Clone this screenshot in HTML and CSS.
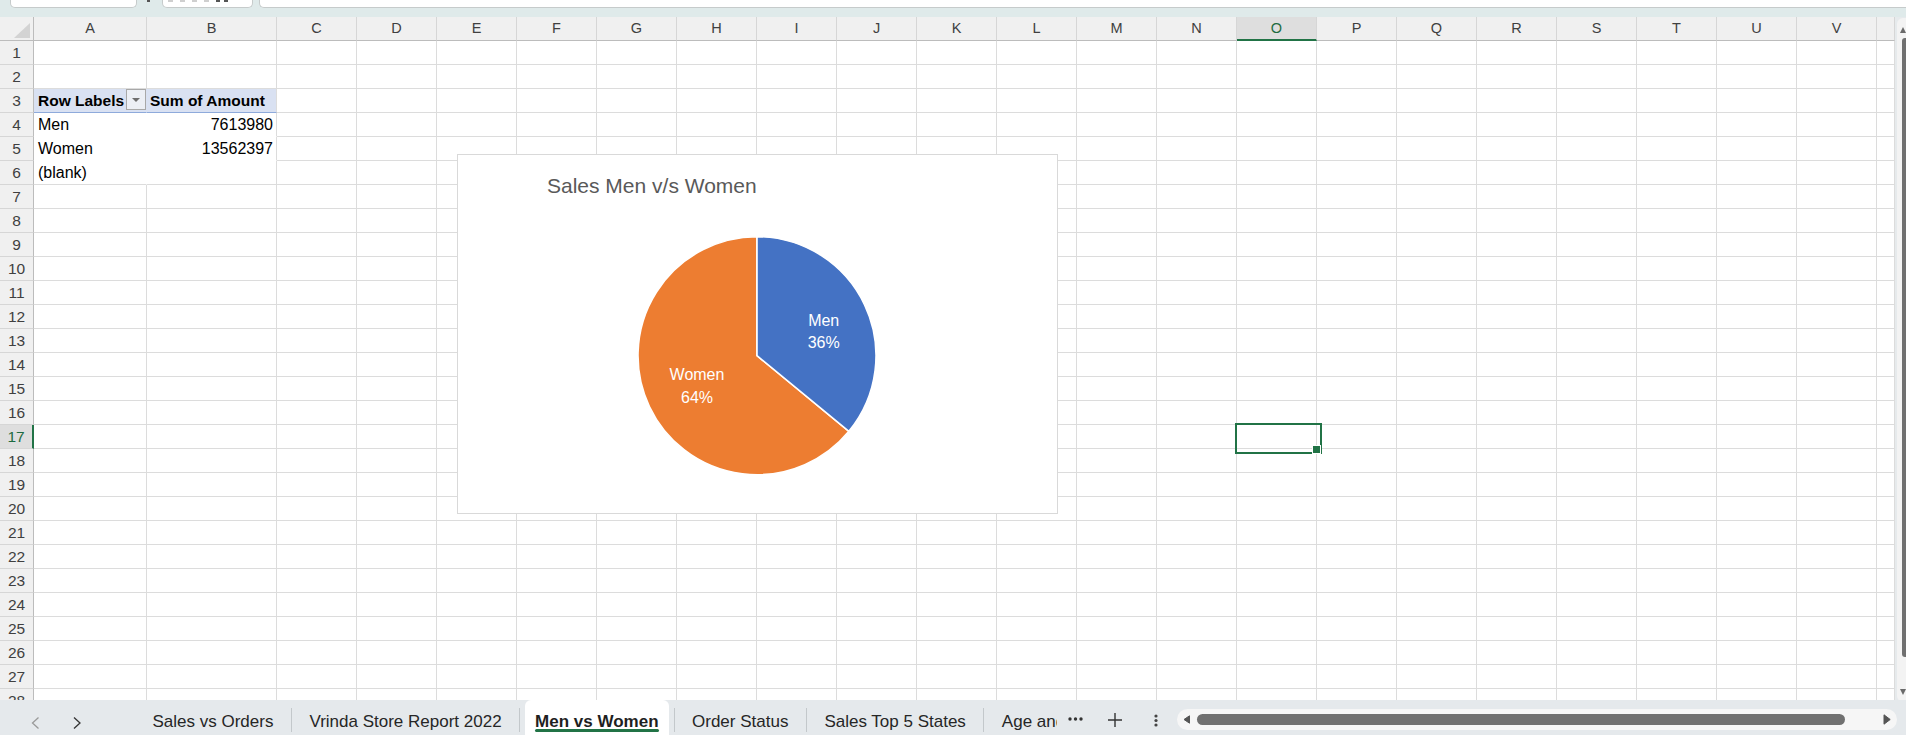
FILE: index.html
```html
<!DOCTYPE html>
<html lang="en">
<head>
<meta charset="utf-8">
<title>Men vs Women</title>
<link rel="stylesheet" href="styles.css">
</head>
<body>
<div class="app">
  <div class="topbar">
    <div class="namebox"></div>
    <div class="nbarrow"></div>
    <div class="fxbox"><span class="ic"></span><span class="ic"></span><span class="ic"></span><span class="ic"></span><span class="ic dk"></span><span class="ic dk"></span></div>
    <div class="formula"></div>
  </div>
  <div class="main">
    <div class="sheet">
      <span class="corner"><em></em></span><span class="ch">A</span><span class="ch">B</span><span class="ch">C</span><span class="ch">D</span><span class="ch">E</span><span class="ch">F</span><span class="ch">G</span><span class="ch">H</span><span class="ch">I</span><span class="ch">J</span><span class="ch">K</span><span class="ch">L</span><span class="ch">M</span><span class="ch">N</span><span class="ch on">O</span><span class="ch">P</span><span class="ch">Q</span><span class="ch">R</span><span class="ch">S</span><span class="ch">T</span><span class="ch">U</span><span class="ch">V</span><span class="ch"></span>
      <span class="rh">1</span><i></i><i></i><i></i><i></i><i></i><i></i><i></i><i></i><i></i><i></i><i></i><i></i><i></i><i></i><i></i><i></i><i></i><i></i><i></i><i></i><i></i><i></i><i></i>
      <span class="rh">2</span><i></i><i></i><i></i><i></i><i></i><i></i><i></i><i></i><i></i><i></i><i></i><i></i><i></i><i></i><i></i><i></i><i></i><i></i><i></i><i></i><i></i><i></i><i></i>
      <span class="rh">3</span><i class="pvh pa">Row Labels<span class="flt"><span class="tri"></span></span></i><i class="pvh">Sum of Amount</i><i></i><i></i><i></i><i></i><i></i><i></i><i></i><i></i><i></i><i></i><i></i><i></i><i></i><i></i><i></i><i></i><i></i><i></i><i></i><i></i><i></i>
      <span class="rh">4</span><i class="t pa nb">Men</i><i class="t r nb">7613980</i><i></i><i></i><i></i><i></i><i></i><i></i><i></i><i></i><i></i><i></i><i></i><i></i><i></i><i></i><i></i><i></i><i></i><i></i><i></i><i></i><i></i>
      <span class="rh">5</span><i class="t pa nb">Women</i><i class="t r nb">13562397</i><i></i><i></i><i></i><i></i><i></i><i></i><i></i><i></i><i></i><i></i><i></i><i></i><i></i><i></i><i></i><i></i><i></i><i></i><i></i><i></i><i></i>
      <span class="rh">6</span><i class="t pa">(blank)</i><i></i><i></i><i></i><i></i><i></i><i></i><i></i><i></i><i></i><i></i><i></i><i></i><i></i><i></i><i></i><i></i><i></i><i></i><i></i><i></i><i></i><i></i>
      <span class="rh">7</span><i></i><i></i><i></i><i></i><i></i><i></i><i></i><i></i><i></i><i></i><i></i><i></i><i></i><i></i><i></i><i></i><i></i><i></i><i></i><i></i><i></i><i></i><i></i>
      <span class="rh">8</span><i></i><i></i><i></i><i></i><i></i><i></i><i></i><i></i><i></i><i></i><i></i><i></i><i></i><i></i><i></i><i></i><i></i><i></i><i></i><i></i><i></i><i></i><i></i>
      <span class="rh">9</span><i></i><i></i><i></i><i></i><i></i><i></i><i></i><i></i><i></i><i></i><i></i><i></i><i></i><i></i><i></i><i></i><i></i><i></i><i></i><i></i><i></i><i></i><i></i>
      <span class="rh">10</span><i></i><i></i><i></i><i></i><i></i><i></i><i></i><i></i><i></i><i></i><i></i><i></i><i></i><i></i><i></i><i></i><i></i><i></i><i></i><i></i><i></i><i></i><i></i>
      <span class="rh">11</span><i></i><i></i><i></i><i></i><i></i><i></i><i></i><i></i><i></i><i></i><i></i><i></i><i></i><i></i><i></i><i></i><i></i><i></i><i></i><i></i><i></i><i></i><i></i>
      <span class="rh">12</span><i></i><i></i><i></i><i></i><i></i><i></i><i></i><i></i><i></i><i></i><i></i><i></i><i></i><i></i><i></i><i></i><i></i><i></i><i></i><i></i><i></i><i></i><i></i>
      <span class="rh">13</span><i></i><i></i><i></i><i></i><i></i><i></i><i></i><i></i><i></i><i></i><i></i><i></i><i></i><i></i><i></i><i></i><i></i><i></i><i></i><i></i><i></i><i></i><i></i>
      <span class="rh">14</span><i></i><i></i><i></i><i></i><i></i><i></i><i></i><i></i><i></i><i></i><i></i><i></i><i></i><i></i><i></i><i></i><i></i><i></i><i></i><i></i><i></i><i></i><i></i>
      <span class="rh">15</span><i></i><i></i><i></i><i></i><i></i><i></i><i></i><i></i><i></i><i></i><i></i><i></i><i></i><i></i><i></i><i></i><i></i><i></i><i></i><i></i><i></i><i></i><i></i>
      <span class="rh">16</span><i></i><i></i><i></i><i></i><i></i><i></i><i></i><i></i><i></i><i></i><i></i><i></i><i></i><i></i><i></i><i></i><i></i><i></i><i></i><i></i><i></i><i></i><i></i>
      <span class="rh on">17</span><i></i><i></i><i></i><i></i><i></i><i></i><i></i><i></i><i></i><i></i><i></i><i></i><i></i><i></i><i class="sel"></i><i></i><i></i><i></i><i></i><i></i><i></i><i></i><i></i>
      <span class="rh">18</span><i></i><i></i><i></i><i></i><i></i><i></i><i></i><i></i><i></i><i></i><i></i><i></i><i></i><i></i><i></i><i></i><i></i><i></i><i></i><i></i><i></i><i></i><i></i>
      <span class="rh">19</span><i></i><i></i><i></i><i></i><i></i><i></i><i></i><i></i><i></i><i></i><i></i><i></i><i></i><i></i><i></i><i></i><i></i><i></i><i></i><i></i><i></i><i></i><i></i>
      <span class="rh">20</span><i></i><i></i><i></i><i></i><i></i><i></i><i></i><i></i><i></i><i></i><i></i><i></i><i></i><i></i><i></i><i></i><i></i><i></i><i></i><i></i><i></i><i></i><i></i>
      <span class="rh">21</span><i></i><i></i><i></i><i></i><i></i><i></i><i></i><i></i><i></i><i></i><i></i><i></i><i></i><i></i><i></i><i></i><i></i><i></i><i></i><i></i><i></i><i></i><i></i>
      <span class="rh">22</span><i></i><i></i><i></i><i></i><i></i><i></i><i></i><i></i><i></i><i></i><i></i><i></i><i></i><i></i><i></i><i></i><i></i><i></i><i></i><i></i><i></i><i></i><i></i>
      <span class="rh">23</span><i></i><i></i><i></i><i></i><i></i><i></i><i></i><i></i><i></i><i></i><i></i><i></i><i></i><i></i><i></i><i></i><i></i><i></i><i></i><i></i><i></i><i></i><i></i>
      <span class="rh">24</span><i></i><i></i><i></i><i></i><i></i><i></i><i></i><i></i><i></i><i></i><i></i><i></i><i></i><i></i><i></i><i></i><i></i><i></i><i></i><i></i><i></i><i></i><i></i>
      <span class="rh">25</span><i></i><i></i><i></i><i></i><i></i><i></i><i></i><i></i><i></i><i></i><i></i><i></i><i></i><i></i><i></i><i></i><i></i><i></i><i></i><i></i><i></i><i></i><i></i>
      <span class="rh">26</span><i></i><i></i><i></i><i></i><i></i><i></i><i></i><i></i><i></i><i></i><i></i><i></i><i></i><i></i><i></i><i></i><i></i><i></i><i></i><i></i><i></i><i></i><i></i>
      <span class="rh">27</span><i></i><i></i><i></i><i></i><i></i><i></i><i></i><i></i><i></i><i></i><i></i><i></i><i></i><i></i><i></i><i></i><i></i><i></i><i></i><i></i><i></i><i></i><i></i>
      <span class="rh">28</span><i></i><i></i><i></i><i></i><i></i><i></i><i></i><i></i><i></i><i></i><i></i><i></i><i></i><i></i><i></i><i></i><i></i><i></i><i></i><i></i><i></i><i></i><i></i>

      <div class="chart">
        <div class="ctitle">Sales Men v/s Women</div>
        <svg class="pie" width="599" height="300" viewBox="0 0 599 300">
          <path d="M299 157.7 L390.9 233.3 A119 119 0 1 1 299 38.7 Z" fill="#ed7d31" stroke="#fff" stroke-width="1.6" stroke-linejoin="round"/>
          <path d="M299 157.7 L299 38.7 A119 119 0 0 1 390.9 233.3 Z" fill="#4472c4" stroke="#fff" stroke-width="1.6" stroke-linejoin="round"/>
          <text class="lbl" x="365.7" y="127.7">Men</text>
          <text class="lbl" x="365.7" y="150">36%</text>
          <text class="lbl" x="239" y="182">Women</text>
          <text class="lbl" x="239" y="204.7">64%</text>
        </svg>
      </div>
    </div>
    <svg class="vscroll" width="9" height="684" viewBox="0 0 9 684">
      <rect x="0" y="0" width="16" height="684" rx="6" fill="#f3f3f3"/>
      <path d="M3 15 L6 9 L9 15 Z" fill="#6a6a6a"/>
      <rect x="5" y="20" width="8" height="619" rx="3" fill="#707070"/>
      <path d="M3 671 L9 671 L6 677 Z" fill="#6a6a6a"/>
    </svg>
  </div>
  <div class="tabbar">
    <svg class="nav" width="135" height="35" viewBox="0 0 135 35">
      <polyline points="38.5,17.5 32.5,23 38.5,28.5" fill="none" stroke="#9a9a9a" stroke-width="1.3"/>
      <polyline points="74,17.5 80,23 74,28.5" fill="none" stroke="#333" stroke-width="1.3"/>
    </svg>
    <div class="tabs">
      <div class="tab">Sales vs Orders</div>
      <div class="sep"></div>
      <div class="tab">Vrinda Store Report 2022</div>
      <div class="sep"></div>
      <div class="tab act">Men vs Women</div>
      <div class="sep"></div>
      <div class="tab">Order Status</div>
      <div class="sep"></div>
      <div class="tab">Sales Top 5 States</div>
      <div class="sep"></div>
      <div class="tab">Age and Gender</div>
    </div>
    <svg class="more" width="15" height="4" viewBox="0 0 15 4"><circle cx="2" cy="2" r="1.7" fill="#333"/><circle cx="7.5" cy="2" r="1.7" fill="#333"/><circle cx="13" cy="2" r="1.7" fill="#333"/></svg>
    <svg class="plus" width="16" height="16" viewBox="0 0 16 16"><path d="M8 1 V15 M1 8 H15" stroke="#333" stroke-width="1.4" fill="none"/></svg>
    <svg class="kebab" width="4" height="13" viewBox="0 0 4 13"><circle cx="2" cy="2" r="1.6" fill="#444"/><circle cx="2" cy="6.5" r="1.6" fill="#444"/><circle cx="2" cy="11" r="1.6" fill="#444"/></svg>
    <div class="hscroll">
      <svg class="harr l" width="7" height="9" viewBox="0 0 7 9"><path d="M6.5 0.8 L1 4.5 L6.5 8.2 Z" fill="#555" stroke="#555" stroke-width="1" stroke-linejoin="round"/></svg>
      <div class="thumb"></div>
      <svg class="harr r" width="8" height="11" viewBox="0 0 8 11"><path d="M1 0.8 L7.2 5.5 L1 10.2 Z" fill="#555" stroke="#555" stroke-width="1" stroke-linejoin="round"/></svg>
    </div>
  </div>
</div>
</body>
</html>
```
FILE: styles.css
```css
* { box-sizing: border-box; margin: 0; padding: 0; }
html, body { width: 1906px; height: 735px; overflow: hidden; }
body { background: #e6eaec; font-family: "Liberation Sans", Arial, sans-serif; color: #000; }

.app { display: flex; flex-direction: column; width: 1906px; height: 735px; }

/* top formula strip (cut off) */
.topbar { flex: none; height: 17px; display: flex; align-items: flex-start; background: #dfeaea; }
.namebox { margin-left: 10px; width: 127px; height: 8px; background: #fff; border: 1px solid #c6cbcb; border-top: 0; border-radius: 0 0 5px 5px; }
.nbarrow { margin-left: 10px; width: 3px; height: 2px; background: #555; }
.fxbox { margin-left: 12px; width: 91px; height: 8px; background: #fff; border: 1px solid #c6cbcb; border-top: 0; border-radius: 0 0 5px 5px; display: flex; align-items: flex-start; padding-left: 5px; }
.ic { width: 5px; height: 2px; background: #cfcfcf; margin-right: 7px; }
.ic.dk { width: 4px; background: #555; margin-right: 4px; }
.ic.dk:first-of-type { margin-left: 14px; }
.formula { margin-left: 6px; flex: 1; height: 8px; background: #fff; border: 1px solid #c6cbcb; border-top: 0; border-right: 0; border-radius: 0 0 0 5px; }

/* sheet */
.main { flex: none; height: 683px; display: flex; gap: 2px; }
.sheet { position: relative; flex: none; width: 1895px; height: 683px; overflow: hidden; background: #fff;
  display: grid; grid-template-columns: 34px 113px 130px repeat(20, 80px) 18px; grid-auto-rows: 24px; align-content: start; }
.sheet i { font-style: normal; border-right: 1px solid #dcdcdc; border-bottom: 1px solid #dcdcdc; min-width: 0; }

.corner { background: #f0f0f0; border-right: 1px solid #bcbcbc; border-bottom: 1px solid #bcbcbc; display: flex; justify-content: flex-end; align-items: flex-end; padding: 0 3px 2px 0; }
.corner em { width: 0; height: 0; border-left: 16px solid transparent; border-bottom: 15px solid #d3d3d3; }

.ch { background: #f0f0f0; border-right: 1px solid #d6d6d6; border-bottom: 1px solid #bcbcbc; text-align: center; font-size: 14.5px; line-height: 23px; color: #404040; }
.ch.on { background: #dedede; color: #1d6b41; border-bottom: 2px solid #217346; }
.rh { background: #f0f0f0; border-right: 1px solid #bcbcbc; border-bottom: 1px solid #d6d6d6; text-align: center; font-size: 15.5px; line-height: 23px; color: #404040; }
.rh.on { background: #dedede; color: #1d6b41; border-right: 2px solid #217346; }

.sheet .t { font-size: 16px; line-height: 23px; padding: 0 3px 0 4px; white-space: nowrap; overflow: hidden; }
.sheet .r { text-align: right; }
.sheet .pa { border-right-color: transparent; }
.sheet .nb { border-bottom-color: transparent; }
.sheet .pvh { background: #d9e1f2; border-bottom-color: #8eaadb; font-weight: bold; font-size: 15.5px; line-height: 23px; padding-left: 3px; white-space: nowrap; }
.sheet .pvh.pa { border-right-color: #d9e1f2; display: flex; align-items: flex-start; padding-left: 4px; }
.flt { margin-left: auto; width: 20px; height: 21px; border: 1px solid #a8a8a8; background: #eceff5; display: flex; align-items: center; justify-content: center; }
.tri { width: 0; height: 0; border-left: 4px solid transparent; border-right: 4px solid transparent; border-top: 4px solid #6e6e6e; }

.sel { position: relative; }
.sel::before { content: ""; position: absolute; left: -2px; top: -2px; width: 83px; height: 27px; border: 2px solid #217346; }
.sel::after { content: ""; position: absolute; left: 75px; top: 20px; width: 7px; height: 7px; background: #217346; border: 1px solid #fff; }

/* floating chart */
.chart { position: absolute; left: 457px; top: 137px; width: 601px; height: 360px; background: #fff; border: 1px solid #d9d9d9; }
.ctitle { margin: 19px 0 0 89px; font-size: 21px; line-height: 24px; color: #595959; white-space: nowrap; }
.pie { display: block; }
.lbl { font-family: "Liberation Sans", Arial, sans-serif; font-size: 16px; fill: #fff; text-anchor: middle; }

.vscroll { flex: none; margin-top: 1px; }

/* sheet tabs */
.tabbar { flex: none; height: 35px; display: flex; align-items: flex-start; background: #e5e9ec; }
.nav { flex: none; }
.tabs { flex: none; width: 922px; height: 35px; display: flex; overflow: hidden; }
.tab { flex: none; position: relative; padding: 12px 17.5px 0; font-size: 17px; line-height: 19px; color: #262626; white-space: nowrap; }
.tab.act { background: #fff; margin: 0 5px; padding: 12px 10px 0; font-weight: bold; color: #1f1f1f; border-radius: 6px 6px 0 0; }
.tab.act::after { content: ""; position: absolute; left: 10px; right: 10px; bottom: 3px; height: 3px; border-radius: 2px; background: #217346; }
.sep { flex: none; width: 1px; margin: 8px 0 3px; background: #c3c8cb; }
.more { flex: none; margin: 17px 0 0 11px; }
.plus { flex: none; margin: 12px 0 0 24px; }
.kebab { flex: none; margin: 14px 0 0 31px; }
.hscroll { flex: none; margin: 9px 0 0 19px; width: 720px; height: 21px; border-radius: 11px; background: #f6f6f6; display: flex; align-items: center; }
.harr { flex: none; }
.harr.l { margin-left: 6px; }
.thumb { flex: none; width: 648px; height: 11px; margin-left: 7px; border-radius: 6px; background: #707070; }
.harr.r { margin-left: 38px; }
```
